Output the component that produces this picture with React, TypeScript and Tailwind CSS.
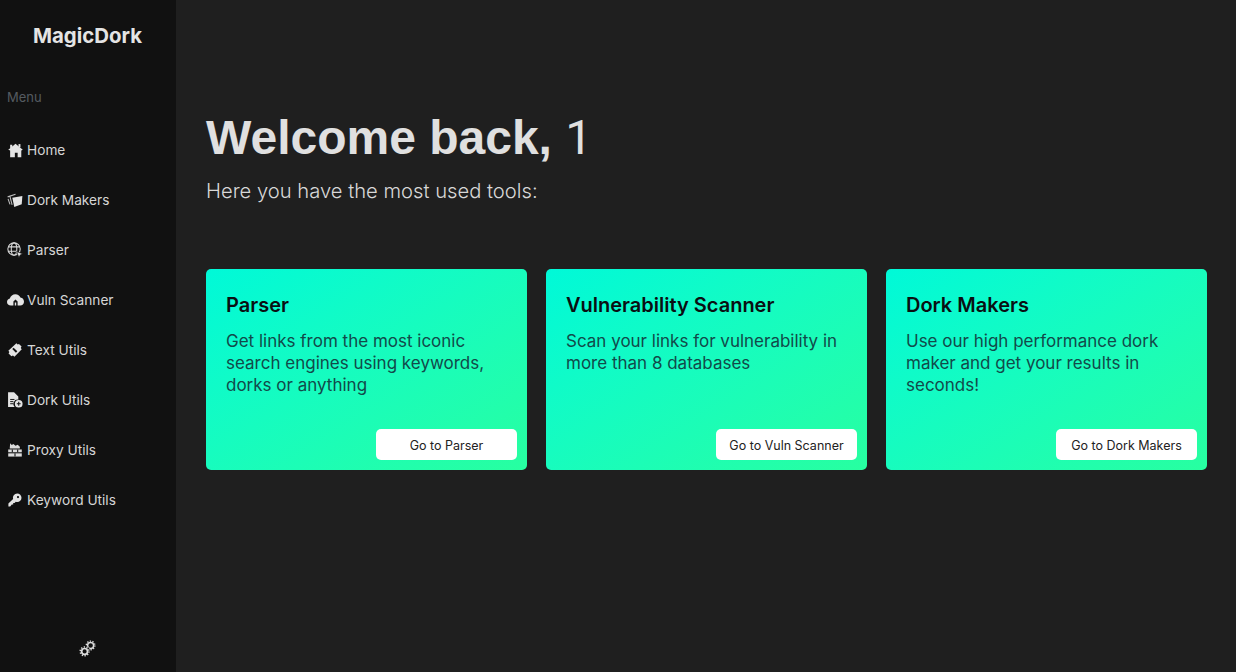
import type { ReactNode } from "react"

const sans = "font-['Inter','Noto_Sans',sans-serif]"

function HomeIcon() {
  return (
    <svg viewBox="0 0 14 14" className="h-[15px] w-[15px]" fill="#e4e4e4">
      <path d="M7 .6 13.8 6.4 12.4 6.9V13.4H9V9.2H6.4V13.4H2V6.9L.2 6.4 2 4.8V1.6H4V3.2Z" />
      <rect x="9.8" y="1" width="1.8" height="3" />
    </svg>
  )
}

function BoxesIcon() {
  return (
    <svg viewBox="0 0 15 14" className="h-[15px] w-[16px]" fill="none" stroke="#bdbdbd" strokeWidth="1">
      <path d="M.6 3.6 8 1.2M1 5.5 2.8 10.6M2.8 3.4 4.8 11" />
      <path d="M5 4.4 14.4 2.8 13.8 10.6 6.8 13Z" fill="#e4e4e4" stroke="none" />
    </svg>
  )
}

function GlobeIcon() {
  return (
    <svg viewBox="0 0 15 15" className="h-[16px] w-[16px]" fill="none" stroke="#d8d8d8" strokeWidth="1">
      <circle cx="6.6" cy="6.6" r="5.8" />
      <ellipse cx="6.6" cy="6.6" rx="2.6" ry="5.8" />
      <path d="M1 4.6H12.2M1 8.6H9" />
      <path d="M9 9 14.8 11 12.4 12.2 11.2 14.8Z" fill="#e4e4e4" stroke="#111111" strokeWidth=".7" />
    </svg>
  )
}

function CloudIcon() {
  return (
    <svg viewBox="0 0 17 12" className="h-[12px] w-[17px]" fill="#e4e4e4">
      <path
        fillRule="evenodd"
        d="M4 11.6C1.6 11.6 0 10 0 8 0 6.2 1.2 5 2.8 4.6 3.6 2 5.8.2 8.4.2c2.4 0 4.3 1.3 5 3.4C15.6 3.8 17 5.6 17 7.8c0 2.2-1.6 3.8-3.8 3.8H10.6V7.4L8.5 5.6 6.4 7.4V11.6ZM7.8 11.6V8.4H9.2V11.6Z"
      />
    </svg>
  )
}

function TicketIcon() {
  return (
    <svg viewBox="0 0 13 13" className="h-[14px] w-[14px]" fill="#e4e4e4">
      <path d="M7.8.2 9 1.4 10.2.9 12.6 3.2 11.8 4.6 12.8 5.8 6 12.8 4.6 11.6 3.2 12.2.5 9.8 1.3 8.4.3 7.2Z" />
      <path d="M4.6 5 8 8.4" stroke="#111111" strokeWidth="1.8" />
    </svg>
  )
}

function FileIcon() {
  return (
    <svg viewBox="0 0 15 15" className="h-[16px] w-[16px]" fill="#e4e4e4">
      <path d="M1 .2H6.6L10.6 4.2V7.2A4 4 0 0 0 7.2 14H1Z" />
      <path d="M3 7H7M3 9H6M3 11H6" stroke="#111111" strokeWidth=".9" />
      <circle cx="11" cy="11" r="3.6" />
      <path d="M11 9.2V12.8M9.2 11H12.8" stroke="#111111" strokeWidth="1" />
    </svg>
  )
}

function WallIcon() {
  return (
    <svg viewBox="0 0 13 13" className="h-[14px] w-[14px]" fill="#dcdcdc">
      <path d="M2 .3 3.5 1.8 5 1 7 2.6 9 1.6 11 3.4V5H1.6Z" />
      <rect x="0.2" y="6" width="12.6" height="2.6" />
      <rect x="0.2" y="9.6" width="12.6" height="3" />
      <path d="M4 6V8.6M9 6V8.6M6.5 9.6V12.6" stroke="#111111" strokeWidth="1" />
    </svg>
  )
}

function KeyIcon() {
  return (
    <svg viewBox="0 0 14 14" className="h-[14px] w-[14px]" fill="#e4e4e4">
      <path
        fillRule="evenodd"
        d="M9.2.4A4.3 4.3 0 0 1 9.2 9C8.7 9 8.2 8.9 7.8 8.7L6.6 10H5.2V11.4H3.8L2.2 13.4H.4V10.6L5.1 6A4.3 4.3 0 0 1 9.2.4ZM10 3A1.1 1.1 0 1 0 10 5.2 1.1 1.1 0 0 0 10 3Z"
      />
    </svg>
  )
}

function CogsIcon() {
  return (
    <svg viewBox="0 0 17 17" className="h-[17px] w-[17px]" fill="none" stroke="#dcdcdc">
      <circle cx="11.6" cy="5.4" r="3" strokeWidth="1.5" />
      <circle cx="11.6" cy="5.4" r="4.3" strokeWidth="1.4" strokeDasharray="1.3 1.4" />
      <circle cx="5.6" cy="11.4" r="5.6" fill="#111111" stroke="none" />
      <circle cx="5.6" cy="11.4" r="2.9" strokeWidth="1.7" />
      <circle cx="5.6" cy="11.4" r="4.4" strokeWidth="1.5" strokeDasharray="1.3 1.46" />
    </svg>
  )
}

const navItems: { label: string; icon: ReactNode }[] = [
  { label: "Home", icon: <HomeIcon /> },
  { label: "Dork Makers", icon: <BoxesIcon /> },
  { label: "Parser", icon: <GlobeIcon /> },
  { label: "Vuln Scanner", icon: <CloudIcon /> },
  { label: "Text Utils", icon: <TicketIcon /> },
  { label: "Dork Utils", icon: <FileIcon /> },
  { label: "Proxy Utils", icon: <WallIcon /> },
  { label: "Keyword Utils", icon: <KeyIcon /> },
]

const tools = [
  {
    title: "Parser",
    text: "Get links from the most iconic search engines using keywords, dorks or anything",
    cta: "Go to Parser",
  },
  {
    title: "Vulnerability Scanner",
    text: "Scan your links for vulnerability in more than 8 databases",
    cta: "Go to Vuln Scanner",
  },
  {
    title: "Dork Makers",
    text: "Use our high performance dork maker and get your results in seconds!",
    cta: "Go to Dork Makers",
  },
]

function Sidebar() {
  return (
    <aside className="flex h-[672px] w-[176px] shrink-0 flex-col bg-[#111111]">
      <div className="flex h-[72px] items-center justify-center pr-[1px] text-[20.4px] font-bold text-[#e4e4e4]">MagicDork</div>
      <p className="mt-[16px] h-[18px] pl-[7px] text-[13px] leading-[18px] text-[#555b60]">Menu</p>
      <nav className="mt-[19px] flex flex-col">
        {navItems.map((item) => (
          <a key={item.label} className="flex h-[50px] items-center text-[13.7px] text-[#d6d6d6]">
            <span className="flex w-[27px] shrink-0 justify-center pl-[3px]">{item.icon}</span>
            <span>{item.label}</span>
          </a>
        ))}
      </nav>
      <div className="mt-auto flex justify-center pb-[15px] pr-[2px]">
        <CogsIcon />
      </div>
    </aside>
  )
}

function ToolCard({ title, text, cta }: { title: string; text: string; cta: string }) {
  return (
    <div className="flex h-[201px] flex-col rounded-[5px] bg-gradient-to-br from-[#00f9d8] to-[#27ffa0] pl-[20px] pr-[10px] pt-[22px] pb-[10px]">
      <h2 className="text-[20px] font-semibold leading-[28px] text-[#0a0f12]">{title}</h2>
      <p className="mt-[11px] pr-[8px] text-[17px] leading-[22px] text-[#124a4a]">{text}</p>
      <button className="mt-auto h-[31px] w-[141px] self-end rounded-[5px] bg-white pt-[3px] text-[12.5px] text-[#222222]">
        {cta}
      </button>
    </div>
  )
}

export default function App() {
  return (
    <div className={`flex h-[672px] w-[1236px] overflow-hidden bg-[#1f1f1f] ${sans}`}>
      <Sidebar />
      <main className="flex-1 pl-[30px] pr-[29px] pt-[110px]">
        <h1 className="font-['Liberation_Sans',Arial,sans-serif] text-[48px] font-bold leading-[55px] text-[#e0e0e0]">
          Welcome back, <span className="font-['Roboto',sans-serif] font-normal">1</span>
        </h1>
        <p className="mt-[12px] text-[20.2px] font-light leading-[28px] text-[#d8d8d8]">Here you have the most used tools:</p>
        <div className="mt-[64px] grid grid-cols-3 gap-[19px]">
          {tools.map((t) => (
            <ToolCard key={t.title} {...t} />
          ))}
        </div>
      </main>
    </div>
  )
}
